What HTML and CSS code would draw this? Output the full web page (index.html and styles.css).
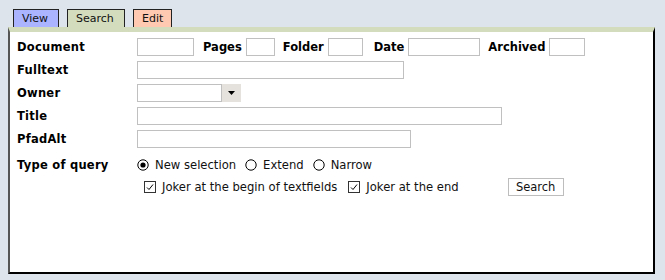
FILE: index.html
```html
<!DOCTYPE html>
<html>
<head>
<meta charset="utf-8">
<link rel="stylesheet" href="styles.css">
</head>
<body>
<div class="tabs">
  <span class="tab tab-view">View</span>
  <span class="tab tab-search">Search</span>
  <span class="tab tab-edit">Edit</span>
</div>
<div class="panel">
  <form class="form">
    <div class="row">
      <label class="lbl">Document</label>
      <input class="inp w-doc" type="text">
      <label class="lbl-in l-pages">Pages</label>
      <input class="inp w-pages" type="text">
      <label class="lbl-in l-folder">Folder</label>
      <input class="inp w-folder" type="text">
      <label class="lbl-in l-date">Date</label>
      <input class="inp w-date" type="text">
      <label class="lbl-in l-arch">Archived</label>
      <input class="inp w-arch" type="text">
    </div>
    <div class="row">
      <label class="lbl">Fulltext</label>
      <input class="inp w-full" type="text">
    </div>
    <div class="row">
      <label class="lbl">Owner</label>
      <span class="combo">
        <select class="combo-field"></select>
        <span class="combo-btn"><svg width="7" height="4" viewBox="0 0 7 4"><path d="M0 0H7L3.5 4Z" fill="#000"/></svg></span>
      </span>
    </div>
    <div class="row">
      <label class="lbl">Title</label>
      <input class="inp w-title" type="text">
    </div>
    <div class="row">
      <label class="lbl">PfadAlt</label>
      <input class="inp w-pfad" type="text">
    </div>
    <div class="row row-radio">
      <label class="lbl">Type of query</label>
      <span class="opt">
        <svg class="radio" width="12" height="12" viewBox="0 0 12 12"><circle cx="6" cy="6" r="5.2" fill="#fff" stroke="#000" stroke-width="1"/><circle cx="6" cy="6" r="2.6" fill="#000"/></svg>
        <span class="opt-text">New selection</span>
      </span>
      <span class="opt">
        <svg class="radio" width="12" height="12" viewBox="0 0 12 12"><circle cx="6" cy="6" r="5.2" fill="#fff" stroke="#000" stroke-width="1"/></svg>
        <span class="opt-text">Extend</span>
      </span>
      <span class="opt">
        <svg class="radio" width="12" height="12" viewBox="0 0 12 12"><circle cx="6" cy="6" r="5.2" fill="#fff" stroke="#000" stroke-width="1"/></svg>
        <span class="opt-text">Narrow</span>
      </span>
    </div>
    <div class="row row-check">
      <span class="opt opt-check1">
        <svg class="check" width="12" height="12" viewBox="0 0 12 12"><rect x="0.5" y="0.5" width="11" height="11" fill="#fff" stroke="#333" stroke-width="1"/><path d="M3 6.5L5 8.5L9 3.5" fill="none" stroke="#000" stroke-width="1"/></svg>
        <span class="opt-text">Joker at the begin of textfields</span>
      </span>
      <span class="opt opt-check2">
        <svg class="check" width="12" height="12" viewBox="0 0 12 12"><rect x="0.5" y="0.5" width="11" height="11" fill="#fff" stroke="#333" stroke-width="1"/><path d="M3 6.5L5 8.5L9 3.5" fill="none" stroke="#000" stroke-width="1"/></svg>
        <span class="opt-text">Joker at the end</span>
      </span>
      <button class="btn" type="button">Search</button>
    </div>
  </form>
</div>
</body>
</html>
```
FILE: styles.css
```css
html, body {
  margin: 0;
  padding: 0;
}
body {
  background: #dde4ec;
  font-family: "DejaVu Sans", "Liberation Sans", sans-serif;
  color: #000;
  padding: 9px 10px 6px 8px;
  height: 280px;
  box-sizing: border-box;
  display: flex;
  flex-direction: column;
}
.tabs {
  display: flex;
  gap: 8px;
  padding-left: 5px;
  height: 18px;
}
.tab {
  box-sizing: border-box;
  height: 18px;
  border: 1px solid #222;
  border-bottom: none;
  font-size: 11px;
  line-height: 17px;
  padding: 0 0 0 8px;
  color: #111;
}
.tab-view { background: #aab4ff; width: 46px; }
.tab-search { background: #d3dcbc; width: 58px; }
.tab-edit { background: #ffc8b0; width: 39px; }

.panel {
  flex: 1;
  background: #fff;
  border-top: 5px solid #d3dcbc;
  border-left: 2px solid #555;
  border-right: 2px solid #000;
  border-bottom: 2px solid #000;
  padding: 3px 0 0 7px;
}
.form {
  margin: 0;
}
.row {
  display: flex;
  align-items: center;
  height: 23px;
}
.lbl, .lbl-in {
  font-size: 11.5px;
  font-weight: bold;
}
.lbl {
  width: 120px;
  flex: none;
  letter-spacing: 0.25px;
}
.lbl-in {
  margin-right: 4px;
}
.l-pages { margin-left: 9px; }
.l-folder { margin-left: 8px; }
.l-date { margin-left: 11px; }
.l-arch { margin-left: 8px; }

.inp {
  box-sizing: border-box;
  height: 18px;
  border: 1px solid #c0c0c0;
  margin: 0;
  padding: 0 2px;
  background: #fff;
  font-family: inherit;
  font-size: 12px;
  outline: none;
}
.w-doc { width: 57px; }
.w-pages { width: 29px; }
.w-folder { width: 35px; }
.w-date { width: 72px; }
.w-arch { width: 36px; }
.w-full { width: 267px; }
.w-title { width: 365px; }
.w-pfad { width: 274px; }

.combo {
  display: flex;
  height: 18px;
}
.combo-field {
  appearance: none;
  -webkit-appearance: none;
  box-sizing: border-box;
  width: 85px;
  height: 18px;
  border: 1px solid #c0c0c0;
  border-radius: 0;
  background: #fff;
  margin: 0;
}
.combo-btn {
  width: 19px;
  height: 18px;
  background: #e5e1dd;
  display: flex;
  align-items: center;
  justify-content: center;
}

.row-radio {
  margin-top: 3px;
}
.opt {
  display: flex;
  align-items: center;
  font-size: 11.6px;
  color: #111;
}
.opt + .opt {
  margin-left: 9px;
}
.radio, .check {
  flex: none;
}
.opt-text {
  margin-left: 6px;
}
.row-check {
  height: 21px;
  padding-left: 127px;
}
.row-check .opt + .opt { margin-left: 11px; }
.btn {
  box-sizing: border-box;
  margin-left: 49px;
  width: 56px;
  height: 18px;
  padding: 0;
  border: 1px solid #bdbdbd;
  background: #fff;
  font-family: inherit;
  font-size: 11.5px;
  color: #111;
}
```
